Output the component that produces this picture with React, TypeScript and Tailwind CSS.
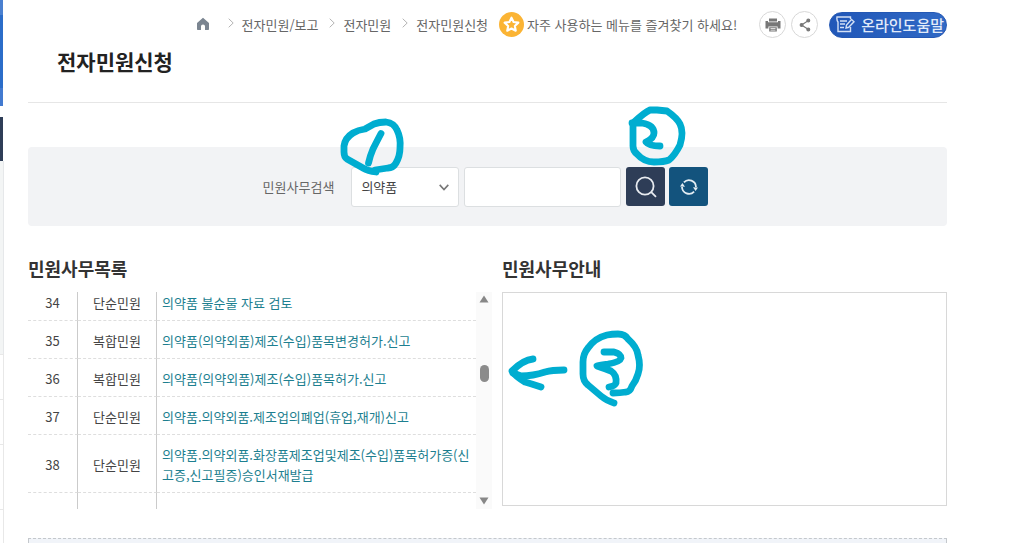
import React from "react";

interface CivilAffair {
  no: number;
  type: string;
  name: string;
}

const affairs: CivilAffair[] = [
  { no: 34, type: "단순민원", name: "의약품 불순물 자료 검토" },
  { no: 35, type: "복합민원", name: "의약품(의약외품)제조(수입)품목변경허가.신고" },
  { no: 36, type: "복합민원", name: "의약품(의약외품)제조(수입)품목허가.신고" },
  { no: 37, type: "단순민원", name: "의약품.의약외품.제조업의폐업(휴업,재개)신고" },
  { no: 38, type: "단순민원", name: "의약품.의약외품.화장품제조업및제조(수입)품목허가증(신고증,신고필증)승인서재발급" },
];

const crumbs = ["전자민원/보고", "전자민원", "전자민원신청"];

const SideRail: React.FC = () => (
  <aside className="w-1 shrink-0 flex flex-col">
    <div className="h-[15px] mr-px bg-[#4a80d0]" />
    <div className="h-[73px] mr-px bg-[#2b6dc9]" />
    <div className="h-[18px] mr-px bg-[#427ad0]" />
    <div className="h-11 mt-[11px] mr-px bg-[#2e3d57]" />
    <div className="h-[193px] bg-[#f3f5f5] border-r border-[#e6e8ea]" />
    <div className="h-[46px] border-y border-r border-[#e8e8e8]" />
    <div className="h-[45px] border-b border-r border-[#e8e8e8]" />
    <div className="h-[65px] border-b border-r border-[#e8e8e8]" />
    <div className="flex-1 border-r border-[#e8e8e8]" />
  </aside>
);

const Breadcrumb: React.FC = () => (
  <nav className="flex items-center" aria-label="breadcrumb">
    <a href="#" aria-label="홈" className="mr-[18px]">
      <svg width="14" height="14" viewBox="0 0 14 14" fill="#7b8591" className="-mt-0.5">
        <path d="M7 0.8 L13 6 V12.2 Q13 13 12.2 13 H9 V9.2 Q9 7.5 7 7.5 Q5 7.5 5 9.2 V13 H1.8 Q1 13 1 12.2 V6 Z" />
      </svg>
    </a>
    {crumbs.map((c) => (
      <React.Fragment key={c}>
        <svg width="6" height="10" viewBox="0 0 6 10" fill="none" stroke="#b4b4b4" className="mr-2 -mt-1">
          <path d="M0.7 0.7 L5.2 5 L0.7 9.3" />
        </svg>
        <a href="#" className="mr-[11px]">{c}</a>
      </React.Fragment>
    ))}
  </nav>
);

const TopBar: React.FC = () => (
  <div className="flex items-center justify-end pt-[11px] text-[13px] leading-5 text-[#666]">
    <Breadcrumb />
    <button type="button" className="flex items-center gap-[3px]">
      <svg width="25" height="25" viewBox="0 0 24 24">
        <circle cx="12" cy="12" r="12" fill="#fbb434" />
        <path
          d="M12 5.4 L14 9.6 L18.6 10.2 L15.2 13.4 L16.1 18 L12 15.8 L7.9 18 L8.8 13.4 L5.4 10.2 L10 9.6 Z"
          fill="none"
          stroke="#fff"
          strokeWidth="2"
          strokeLinejoin="round"
        />
      </svg>
      자주 사용하는 메뉴를 즐겨찾기 하세요!
    </button>
    <button
      type="button"
      aria-label="인쇄"
      className="w-[27px] h-[27px] ml-[22px] rounded-full border border-[#d8d8d8] flex items-center justify-center"
    >
      <svg width="16" height="14" viewBox="0 0 16 14" fill="#777">
        <path d="M4 0.5 H12 V3.5 H4 Z" />
        <path d="M0.5 3 H3 V4.2 H13 V3 H15.5 V10.5 H12.6 V8.4 H3.4 V10.5 H0.5 Z" />
        <path d="M4.2 9.2 H11.8 V13.5 H4.2 Z M5.5 10.3 V10.9 H10.5 V10.3 Z M5.5 11.8 V12.4 H10.5 V11.8 Z" fillRule="evenodd" />
      </svg>
    </button>
    <button
      type="button"
      aria-label="공유"
      className="w-[27px] h-[27px] ml-[5px] rounded-full border border-[#d8d8d8] flex items-center justify-center"
    >
      <svg width="12" height="14" viewBox="0 0 12 14" fill="#777" stroke="#777" strokeWidth="1.2">
        <path d="M9.5 2.5 L2.5 7 L9.5 11.5" fill="none" />
        <circle cx="9.3" cy="2.6" r="1.4" />
        <circle cx="2.6" cy="7" r="1.4" />
        <circle cx="9.3" cy="11.4" r="1.4" />
      </svg>
    </button>
    <a
      href="#"
      className="h-[26px] ml-[11px] pl-[6px] pr-[2px] rounded-full border border-[#2458b4] bg-linear-to-r from-[#2157b8] to-[#3069c5] flex items-center gap-[6px] text-[15px] font-medium text-[#e2ebf9] whitespace-nowrap"
    >
      <svg width="19" height="17" viewBox="0 0 19 17" fill="none" stroke="#d3e0f5" strokeWidth="1.4">
        <path d="M14.5 3 V1 H1 Q0.5 4 2 6 V15.5 H14.5 V11" />
        <path d="M4 5 H11 M4 8 H9 M4 11.5 H8" />
        <path d="M10 12 L10.5 9 L15.5 3.5 L18 5.7 L12.7 11.3 Z" />
      </svg>
      온라인도움말
    </a>
  </div>
);

const SearchForm: React.FC = () => (
  <form
    className="mt-11 h-[79px] pr-1 rounded bg-[#f2f3f5] flex items-center justify-center"
    onSubmit={(e) => e.preventDefault()}
  >
    <label htmlFor="category" className="mr-[17px] text-[13px] text-[#666]">민원사무검색</label>
    <div className="relative mr-[5px]">
      <select
        id="category"
        className="appearance-none block w-[108px] h-10 pl-[9px] rounded-[3px] border border-[#dcdfe1] bg-white text-[13px] text-[#444]"
      >
        <option>의약품</option>
        <option>의료기기</option>
      </select>
      <svg
        width="10"
        height="7"
        viewBox="0 0 10 7"
        fill="none"
        stroke="#777"
        strokeWidth="1.6"
        className="absolute right-[10px] top-[17px] pointer-events-none"
      >
        <path d="M0.7 0.9 L5 5.5 L9.3 0.9" />
      </svg>
    </div>
    <input
      type="text"
      aria-label="민원사무명"
      className="w-[157px] h-10 mr-[5px] px-2 rounded-[3px] border border-[#dcdfe1] bg-white text-[13px]"
    />
    <button
      type="submit"
      aria-label="검색"
      className="w-[39px] h-[39px] mr-1 rounded-[3px] bg-[#2e3d57] flex items-center justify-center"
    >
      <svg width="22" height="22" viewBox="0 0 22 22" fill="none" stroke="#e8ebf0" strokeWidth="1.8">
        <circle cx="10" cy="10" r="8.6" />
        <path d="M16 15.8 L21 20.8" />
      </svg>
    </button>
    <button
      type="reset"
      aria-label="초기화"
      className="w-[39px] h-[39px] rounded-[3px] bg-[#13537d] flex items-center justify-center"
    >
      <svg width="18" height="18" viewBox="0 0 18 18" fill="none" stroke="#e3edf3" strokeWidth="1.8">
        <path d="M3.9 4.4 A7 7 0 0 1 16 9" />
        <path d="M14.1 13.6 A7 7 0 0 1 2 9" />
        <path d="M0 8.6 L2.4 5 L5 8.8 Z M13 9.2 L18 9.4 L15.6 13 Z" fill="#e3edf3" stroke="none" />
      </svg>
    </button>
  </form>
);

const ScrollBar: React.FC = () => (
  <div className="w-4 shrink-0 bg-[#fafafa] flex flex-col items-center pt-[3px] pb-1">
    <svg width="10" height="8" viewBox="0 0 10 8" fill="#878787">
      <path d="M5 0.5 L9.5 7.5 H0.5 Z" />
    </svg>
    <div className="w-[9px] h-[17px] mt-[62px] rounded-full bg-[#8b8b8b]" />
    <svg width="10" height="8" viewBox="0 0 10 8" fill="#878787" className="mt-auto">
      <path d="M5 7.5 L9.5 0.5 H0.5 Z" />
    </svg>
  </div>
);

const AffairList: React.FC = () => (
  <section>
    <h2 className="text-lg leading-7 font-bold text-[#333]">민원사무목록</h2>
    <div className="mt-[10px] h-[217px] flex overflow-hidden">
      <div className="flex-1 min-w-0">
        <table className="w-full table-fixed border-separate border-spacing-0 text-[13px] leading-5 text-[#444]">
          <colgroup>
            <col className="w-[50px]" />
            <col className="w-[79px]" />
            <col />
          </colgroup>
          <tbody>
            {affairs.map((a) => (
              <tr key={a.no} className="group">
                <td className="pt-[10px] pb-[7px] group-first:pt-px text-center border-b border-r border-b-[#dedede] border-r-[#cbcbcb] [border-bottom-style:dashed]">
                  {a.no}
                </td>
                <td className="pt-[10px] pb-[7px] group-first:pt-px text-center border-b border-r border-b-[#dedede] border-r-[#cbcbcb] [border-bottom-style:dashed]">
                  {a.type}
                </td>
                <td className="pt-[10px] pb-[7px] group-first:pt-px pl-[5px] break-all border-b border-dashed border-[#dedede]">
                  <a href="#" className="text-[#1d7f90]">{a.name}</a>
                </td>
              </tr>
            ))}
            <tr>
              <td className="h-10 border-r border-[#cbcbcb]" />
              <td className="h-10 border-r border-[#cbcbcb]" />
              <td />
            </tr>
          </tbody>
        </table>
      </div>
      <ScrollBar />
    </div>
  </section>
);

const AffairGuide: React.FC = () => (
  <section className="flex flex-col">
    <h2 className="text-lg leading-7 font-bold text-[#333]">민원사무안내</h2>
    <div className="mt-[10px] mb-[3px] flex-1 border border-[#d8d8d8]" />
  </section>
);

// hand-drawn step marks over the page
const StepMarks: React.FC = () => (
  <svg
    width="1024"
    height="543"
    viewBox="0 0 1024 543"
    fill="none"
    stroke="#00add0"
    strokeWidth="6.8"
    strokeLinecap="round"
    strokeLinejoin="round"
    className="absolute left-0 top-0 pointer-events-none"
  >
    <path d="M376 172 Q368 171 363 168 L347 159 Q344 157 344 152 V146 Q345 138 353 133 Q358 130 365 129 L374 124 Q379 122 386 122 Q394 123 397 130 Q401 138 400 148 Q400 156 396 163 Q393 168 388 168 L375 170" />
    <path d="M381 133.500 Q376 143 373 149 Q370 156 368.500 163" />
    <path d="M633 125 V146 Q633 151 637 154 Q644 162 654 162 Q664 162 669 160 Q675 155 680 145 Q684 132 680 124 Q677 118 667 111 L657 110 H650 Q645 112 633 123" />
    <path d="M632 123 H642 Q654 125 654 133 Q654 138 646 142 Q649 146 660 146" />
    <path d="M614 403 Q607 401 601 396 L588 385 Q583 381 583 374 V362 Q583 354 588 348 Q595 338 607 335 Q612 334 618 334 Q625 334 628 339 Q637 347 638 355 Q641 366 638 374 Q636 381 632 386 Q630 392 626 392 Q620 393 613 393" />
    <path d="M604 352 H614 Q621 354 621 358 Q620 362 608 364 Q600 365 597 366 Q606 369 611 371 Q617 375 616 383 Q615 386 609 387" />
    <path d="M533 359 Q523 360 512 371 Q515 376 525 382 Q532 384 541 387" />
    <path d="M564 370 Q552 370 545 372 Q533 376 521 376 L513 373" />
  </svg>
);

const App: React.FC = () => {
  return (
    <div
      className="relative min-h-screen flex bg-white overflow-hidden font-['Noto_Sans_CJK_KR',sans-serif]"
      lang="ko"
    >
      <SideRail />
      <main className="flex-1 min-w-0 ml-6 mr-[77px] flex flex-col">
        <header className="border-b border-[#e6e6e6]">
          <TopBar />
          <h1 className="mt-[7px] mb-[25px] pl-[29px] text-[21px] leading-8 font-bold text-[#222]">전자민원신청</h1>
        </header>
        <SearchForm />
        <div className="mt-7 grid grid-cols-[464fr_445fr] gap-x-[10px]">
          <AffairList />
          <AffairGuide />
        </div>
        <div className="mt-[29px] flex-1 border border-b-0 border-dashed border-[#c4c8cc] bg-[#f1f4f9]" />
      </main>
      <StepMarks />
    </div>
  );
};

export default App;
